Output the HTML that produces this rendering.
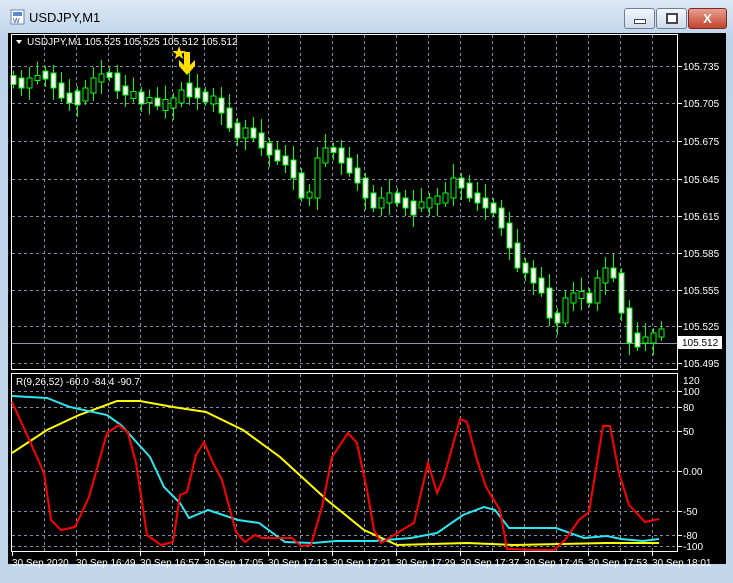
<!DOCTYPE html>
<html><head><style>
body{margin:0;width:733px;height:583px;overflow:hidden;background:#b9d1ea;font-family:"Liberation Sans",sans-serif}
#win{position:absolute;left:0;top:0;width:733px;height:583px;background:linear-gradient(#dbe8f6,#bed3ea 40px,#c3d7ec);}
#title{position:absolute;left:29px;top:10px;font-size:13px;color:#000}
.btn{position:absolute;top:8px;height:19px;border:1px solid #6d7f97;border-radius:3px;background:linear-gradient(#f2f6fb,#cfdbea)}
#chart{position:absolute;left:8px;top:33px;width:718px;height:531px;background:#000}
svg text{font-family:"Liberation Sans",sans-serif;font-size:10px;fill:#fff}
</style></head><body>
<div id="win">
<svg style="position:absolute;left:10px;top:9px" width="16" height="16"><rect x="1" y="1" width="13" height="14" fill="#fff" stroke="#6a86b0"/><rect x="3" y="3" width="9" height="4" fill="#5a8ad0"/><text x="3" y="14" style="font-size:7px;fill:#2050a0">W</text></svg>
<div id="title">USDJPY,M1</div>
<div class="btn" style="left:624px;width:29px"><div style="position:absolute;left:9px;top:10px;width:10px;height:3px;background:#fff;border:1px solid #445"></div></div>
<div class="btn" style="left:656px;width:29px"><div style="position:absolute;left:9px;top:4px;width:8px;height:7px;border:2px solid #445;background:#fff"></div></div>
<div class="btn" style="left:688px;width:37px;background:linear-gradient(#e8a090,#c0432c);border-color:#7a2a20;color:#fff;font-weight:bold;font-size:13px;text-align:center;line-height:19px">X</div>
<div id="chart"></div>
</div>
<svg id="s" style="position:absolute;left:0;top:0" width="733" height="583"></svg>
<script>
var s='';
function L(x1,y1,x2,y2,c,w,d){s+='<line x1="'+x1+'" y1="'+y1+'" x2="'+x2+'" y2="'+y2+'" stroke="'+c+'" stroke-width="'+(w||1)+'"'+(d?' stroke-dasharray="3,3"':'')+'/>';}
function T(x,y,t,a){s+='<text x="'+x+'" y="'+y+'"'+(a?' text-anchor="'+a+'"':'')+'>'+t+'</text>';}
var gc='#7f8ea6';
for(var x=44.5;x<678;x+=32){L(x,35,x,369,gc,1,1);L(x,374,x,551,gc,1,1);}
var py=[66,103,141,179,216,253,290,326,363],pl=['105.735','105.705','105.675','105.645','105.615','105.585','105.555','105.525','105.495'];
for(var i=0;i<9;i++){L(12,py[i]+.5,677,py[i]+.5,gc,1,1);L(678,py[i]+.5,682,py[i]+.5,'#fff');T(683,py[i]+4,pl[i]);}
var iy=[391,407,431,471,511,535,546],il=['100','80','50','0.00','-50','-80','-100'];
for(i=0;i<7;i++){L(12,iy[i]+.5,677,iy[i]+.5,gc,1,1);L(678,iy[i]+.5,682,iy[i]+.5,'#fff');T(683,iy[i]+4,il[i]);}
T(683,384,'120');
L(12,343.5,677,343.5,'#8a97a8');
s+='<rect x="678" y="336" width="44" height="13" fill="#fff"/><text x="682" y="346" style="fill:#000">105.512</text>';
var c=[80,85,80,78,75,85,95,100,98,90,80,78,75,88,92,95,98,100,102,105,100,92,90,95,97,100,110,125,135,130,135,145,152,158,162,175,195,195,160,150,150,160,170,180,195,205,200,195,200,205,208,205,200,200,195,180,185,195,200,205,210,225,245,265,270,280,290,315,320,300,295,295,300,280,270,275,310,340,340,340,335,333];
var amp=[9,-7,12,-5,8,-11,6,-9,14,-6,10,-8,5,-12];
for(i=0;i<c.length;i++){var x=13+i*8,a=amp[i%amp.length];var o=c[i]-a/2,cl=c[i]+a/2;
if(i>0&&c[i]<c[i-1]-3){o=c[i-1]+3;cl=c[i]-2;} else if(i>0&&c[i]>c[i-1]+3){o=c[i-1]-2;cl=c[i]+3;}
var t=Math.min(o,cl),b=Math.max(o,cl);if(b-t<2)b=t+2;
L(x+.5,t-5-(i%4)*3,x+.5,b+4+(i%3)*4,'#0f0');
s+='<rect x="'+(x-2)+'" y="'+t+'" width="5" height="'+(b-t)+'" fill="'+(cl<o?'#000':'#fff')+'" stroke="#0f0"/>';}
s+='<rect x="11.5" y="34.5" width="666" height="335" fill="none" stroke="#fff"/>';
s+='<rect x="11.5" y="373.5" width="666" height="178" fill="none" stroke="#fff"/>';
s+='<polygon points="16,40 22,40 19,44" fill="#fff"/>';T(27,45,'USDJPY,M1  105.525 105.525 105.512 105.512');
s+='<text x="171" y="59" style="font-size:18px;fill:#ffe000">★</text>';
s+='<path d="M184,52h6v13l5,-5v6l-8,9l-8,-9v-6l5,5z" fill="#ffe000"/>';
T(16,385,'R(9,26,52) -60.0 -84.4 -90.7');
function P(p,col){s+='<polyline points="'+p+'" fill="none" stroke="'+col+'" stroke-width="2"/>';}
P('12,453 47,430 79,415 117,401 140,401 173,407 206,412 243,430 280,457 327,500 364,530 397,545 467,543 514,545 607,543 659,543','#ff0');
P('12,396 47,398 70,407 107,415 121,425 150,457 164,487 180,503 189,518 208,510 238,520 259,523 285,542 313,543 336,541 374,541 411,538 437,533 463,515 484,507 495,510 509,528 556,528 584,538 607,536 621,539 643,541 659,539','#2ee6f0');
P('12,402 28,437 44,473 51,520 61,530 75,527 89,497 107,433 119,425 128,433 136,463 147,535 161,545 173,542 180,495 187,492 196,455 204,442 213,463 222,480 236,532 245,542 255,535 262,538 292,538 301,546 311,545 322,507 332,457 348,433 357,443 367,490 374,530 381,543 407,527 414,523 428,463 437,493 444,477 460,419 467,422 477,460 486,487 500,510 507,549 537,550 554,550 565,540 579,520 589,512 603,426 610,426 619,473 629,505 645,522 659,519','#f00');
var tl=['30 Sep 2020','30 Sep 16:49','30 Sep 16:57','30 Sep 17:05','30 Sep 17:13','30 Sep 17:21','30 Sep 17:29','30 Sep 17:37','30 Sep 17:45','30 Sep 17:53','30 Sep 18:01'];
for(i=0;i<11;i++){var x=12+i*64;L(x+.5,552,x+.5,556,'#fff');T(x,566,tl[i]);}
document.getElementById('s').innerHTML=s;
</script>
</body></html>
